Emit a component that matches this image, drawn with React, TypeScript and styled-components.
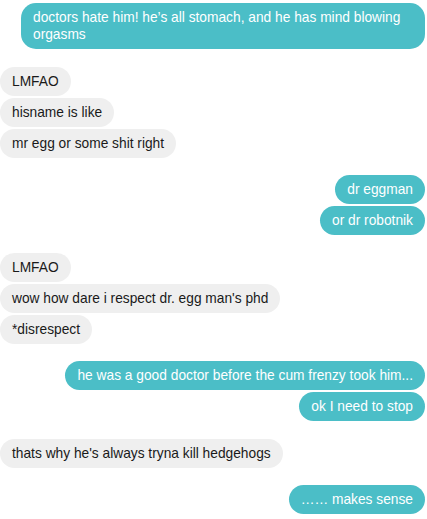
import React from "react";
import styled, { createGlobalStyle } from "styled-components";

const GlobalStyle = createGlobalStyle`
  html, body { margin: 0; padding: 0; background: #ffffff; }
  body { font-family: "Liberation Sans", Arial, Helvetica, sans-serif; }
`;

const Thread = styled.div`
  display: flex;
  flex-direction: column;
  gap: 17.5px;
  padding: 3px 2px 0 0;
  width: 427px;
  box-sizing: border-box;
`;

const Group = styled.div<{ $mine: boolean }>`
  display: flex;
  flex-direction: column;
  align-items: ${(p) => (p.$mine ? "flex-end" : "flex-start")};
  gap: 2px;
`;

const Bubble = styled.div<{ $mine: boolean }>`
  box-sizing: border-box;
  max-width: 404px;
  padding: 6px 12px;
  border-radius: 15px;
  font-size: 13.75px;
  line-height: 17px;
  background: ${(p) => (p.$mine ? "#4bbec7" : "#efefef")};
  color: ${(p) => (p.$mine ? "#ffffff" : "#1a1a1a")};
`;

type Msg = { mine: boolean; lines: string[] };

const groups: Msg[] = [
  { mine: true, lines: ["doctors hate him! he’s all stomach, and he has mind blowing orgasms"] },
  { mine: false, lines: ["LMFAO", "hisname is like", "mr egg or some shit right"] },
  { mine: true, lines: ["dr eggman", "or dr robotnik"] },
  { mine: false, lines: ["LMFAO", "wow how dare i respect dr. egg man's phd", "*disrespect"] },
  { mine: true, lines: ["he was a good doctor before the cum frenzy took him...", "ok I need to stop"] },
  { mine: false, lines: ["thats why he's always tryna kill hedgehogs"] },
  { mine: true, lines: ["…… makes sense"] },
];

export default function App() {
  return (
    <>
      <GlobalStyle />
      <Thread>
        {groups.map((g, i) => (
          <Group key={i} $mine={g.mine}>
            {g.lines.map((t, j) => (
              <Bubble key={j} $mine={g.mine}>
                {t}
              </Bubble>
            ))}
          </Group>
        ))}
      </Thread>
    </>
  );
}
